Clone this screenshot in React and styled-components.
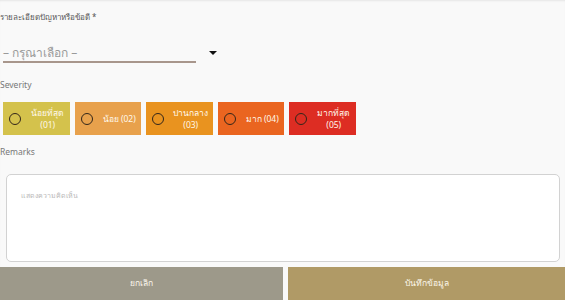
import React from "react";
import styled, { createGlobalStyle } from "styled-components";

const Global = createGlobalStyle`
  html, body { margin: 0; padding: 0; background: #f9f9f9; }
  body { font-family: "Noto Sans", "Liberation Sans", sans-serif; overflow: hidden; }
  * { box-sizing: border-box; }
`;

const Page = styled.div`
  width: 565px;
  height: 300px;
  display: flex;
  flex-direction: column;
  background: #f9f9f9;
  box-shadow: inset 0 2px 2px -1px rgba(0,0,0,0.08);
  & > * { flex-shrink: 0; }
`;

const Label = styled.div`
  font-size: ${(p) => p.$size || 9}px;
  line-height: 12px;
  height: 12px;
  color: ${(p) => p.$color || "#555"};
  margin-top: ${(p) => p.$top}px;
  margin-left: ${(p) => p.$left || 0}px;
  white-space: nowrap;
`;

const SelectRow = styled.div`
  display: flex;
  align-items: flex-start;
  margin-top: 22px;
  margin-left: 3px;
`;

const SelectBox = styled.div`
  width: 193px;
  height: 18px;
  border-bottom: 2px solid #a8968c;
  font-size: 12px;
  line-height: 16px;
  color: #9a9a9a;
  white-space: nowrap;
`;

const Caret = styled.div`
  width: 0;
  height: 0;
  margin-left: 13px;
  margin-top: 6px;
  border-left: 4.5px solid transparent;
  border-right: 4.5px solid transparent;
  border-top: 4.5px solid #111;
`;

const SeverityRow = styled.div`
  display: flex;
  gap: 5px;
  margin-top: 11px;
  margin-left: 3px;
`;

const SevButton = styled.div`
  width: 66.5px;
  height: 33px;
  background: ${(p) => p.$bg};
  display: flex;
  align-items: center;
  padding-left: 6px;
  padding-right: 0;
`;

const Circle = styled.span`
  width: 12px;
  height: 12px;
  flex: none;
  border-radius: 50%;
  border: 1.3px solid #33261a;
`;

const SevText = styled.span`
  flex: 1;
  text-align: center;
  padding-left: 5px;
  color: #fff8ea;
  font-size: 8.5px;
  line-height: 12px;
  white-space: nowrap;
`;

const TextArea = styled.div`
  margin: 16px 5px 0 6px;
  height: 88px;
  background: #fff;
  border: 1px solid #d2d2d2;
  border-radius: 5px;
  padding: 16px 14px;
  font-size: 7px;
  line-height: 10px;
  color: #b9b9b9;
`;

const Actions = styled.div`
  display: flex;
  gap: 5px;
  margin-top: 5px;
  height: 36px;
`;

const ActionButton = styled.div`
  flex: ${(p) => (p.$grow ? 1 : "none")};
  width: ${(p) => (p.$grow ? "auto" : "283px")};
  background: ${(p) => p.$bg};
  color: #fbf6ea;
  font-size: 8.5px;
  display: flex;
  justify-content: center;
  padding-top: 10px;
  line-height: 12px;
`;

const severities = [
  { bg: "#d4c24c", lines: ["น้อยที่สุด", "(01)"] },
  { bg: "#e8a14c", lines: ["น้อย (02)"] },
  { bg: "#e9931f", lines: ["ปานกลาง", "(03)"] },
  { bg: "#ea6520", lines: ["มาก (04)"] },
  { bg: "#dd2d23", lines: ["มากที่สุด", "(05)"] },
];

export default function App() {
  return (
    <>
      <Global />
      <Page>
        <Label $top={11} $color="#555" $size={8}>รายละเอียดปัญหาหรือข้อดี *</Label>
        <SelectRow>
          <SelectBox>– กรุณาเลือก –</SelectBox>
          <Caret />
        </SelectRow>
        <Label $top={16} $color="#777" $size={8.5}>Severity</Label>
        <SeverityRow>
          {severities.map((s, i) => (
            <SevButton key={i} $bg={s.bg}>
              <Circle />
              <SevText>
                {s.lines.map((l, j) => (
                  <div key={j}>{l}</div>
                ))}
              </SevText>
            </SevButton>
          ))}
        </SeverityRow>
        <Label $top={11} $color="#777" $size={8.5}>Remarks</Label>
        <TextArea>แสดงความคิดเห็น</TextArea>
        <Actions>
          <ActionButton $bg="#9d998a">ยกเลิก</ActionButton>
          <ActionButton $bg="#b09a66" $grow>บันทึกข้อมูล</ActionButton>
        </Actions>
      </Page>
    </>
  );
}
